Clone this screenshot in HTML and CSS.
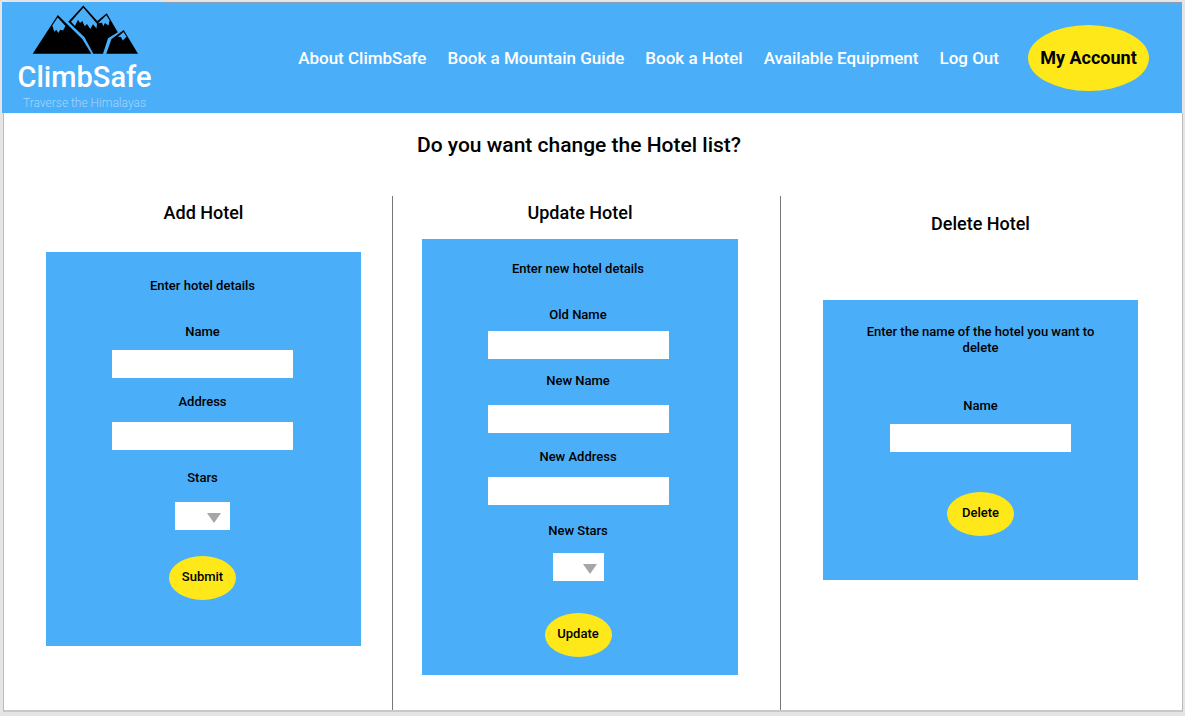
FILE: index.html
```html
<!DOCTYPE html>
<html lang="en">
<head>
<meta charset="utf-8">
<title>ClimbSafe - Hotels</title>
<link rel="stylesheet" href="styles.css">
</head>
<body>
<header class="header">
  <a class="brand" href="#">
    <svg class="brand-mark" viewBox="31 5 106 50" aria-hidden="true">
      <path d="M31.7 54.7 56.8 16 81.3 40 90.3 54.7Z"/>
      <path d="M82.3 6.5 67.3 22.7 83.5 38.3 92.3 54.7H102L107 39.3 116.8 33.3 105.7 14.2 96.3 22Z"/>
      <path d="M105.3 54.7 110.5 40 122.7 31 137 54.7Z"/>
      <path class="snow" d="M56.7 18.6 51.3 26.5 53.3 32.7 55.3 30.7 57.3 34 59.3 30.7 62 31.5 64.5 27Z"/>
      <path class="snow" d="M82.3 8.8 70 22.7 74 27 77 20.7 79 24 81.3 22 83.7 27.3 86 25 89.3 30 92 25.3 95.5 29.5 96 24.7Z"/>
      <path class="snow" d="M105.3 16.2 97 24.2 101 23.7 102.3 27.3 104 24 107.5 26.5 108.6 21.4Z"/>
      <path class="snow" d="M122.5 33 117 37.7 120 38 121.7 41.5 125.5 37.7Z"/>
    </svg>
    <span class="brand-name">ClimbSafe</span>
    <span class="brand-tagline">Traverse the Himalayas</span>
  </a>
  <nav class="nav">
    <a href="#">About ClimbSafe</a>
    <a href="#">Book a Mountain Guide</a>
    <a href="#">Book a Hotel</a>
    <a href="#">Available Equipment</a>
    <a href="#">Log Out</a>
  </nav>
  <button class="oval account" type="button">My Account</button>
</header>
<main class="main">
  <h1 class="title">Do you want change the Hotel list?</h1>
  <div class="columns">
    <section class="column column-add">
      <h2 class="heading">Add Hotel</h2>
      <form class="card">
        <p class="intro">Enter hotel details</p>
        <div class="field name"><label for="add-name">Name</label><input id="add-name" type="text"></div>
        <div class="field address"><label for="add-address">Address</label><input id="add-address" type="text"></div>
        <div class="field stars"><label for="add-stars">Stars</label><select id="add-stars"><option></option><option>1</option><option>2</option><option>3</option><option>4</option><option>5</option></select></div>
        <button class="oval" type="button">Submit</button>
      </form>
    </section>
    <section class="column column-update">
      <h2 class="heading">Update Hotel</h2>
      <form class="card">
        <p class="intro">Enter new hotel details</p>
        <div class="field old-name"><label for="old-name">Old Name</label><input id="old-name" type="text"></div>
        <div class="field new-name"><label for="new-name">New Name</label><input id="new-name" type="text"></div>
        <div class="field new-address"><label for="new-address">New Address</label><input id="new-address" type="text"></div>
        <div class="field new-stars"><label for="new-stars">New Stars</label><select id="new-stars"><option></option><option>1</option><option>2</option><option>3</option><option>4</option><option>5</option></select></div>
        <button class="oval" type="button">Update</button>
      </form>
    </section>
    <section class="column column-delete">
      <h2 class="heading">Delete Hotel</h2>
      <form class="card">
        <p class="intro">Enter the name of the hotel you want to delete</p>
        <div class="field name"><label for="delete-name">Name</label><input id="delete-name" type="text"></div>
        <button class="oval" type="button">Delete</button>
      </form>
    </section>
  </div>
</main>
</body>
</html>
```
FILE: styles.css
```css
* { box-sizing: border-box; }

body {
  margin: 0;
  min-height: 100vh;
  padding: 2px 2px 4px;
  display: flex;
  flex-direction: column;
  background: #e5e5e5;
  color: #000;
  font: 500 13px/16px Roboto, "Liberation Sans", sans-serif;
}

h1, h2, p { margin: 0; font-weight: 500; }

.header {
  display: flex;
  align-items: center;
  min-height: 111px;
  margin-right: 1px;
  padding-right: 33px;
  background: linear-gradient(#8a9fb5, #8a9fb5) 162px 0 / 100% 1px no-repeat #4baef8;
}

.brand {
  display: flex;
  flex-direction: column;
  align-items: center;
  width: 165px;
  padding-top: 2px;
  color: #fff;
  text-decoration: none;
}

.brand-mark { width: 106px; height: 50px; fill: #000; }
.brand-mark .snow { fill: #4baef8; }
.brand-name { font-size: 29px; font-weight: 500; line-height: 32px; margin-top: 7px; }
.brand-tagline { font-size: 12px; line-height: 20px; font-weight: 300; color: #a5d7fc; }

.nav {
  flex: 1;
  display: flex;
  justify-content: flex-end;
  gap: 21px;
  margin-right: 29px;
}

.nav a {
  color: #fff;
  font-size: 17px;
  line-height: 20px;
  text-decoration: none;
  white-space: nowrap;
}

.oval {
  width: 67px;
  height: 44px;
  padding: 0 0 2px;
  border: 0;
  border-radius: 50%;
  background: #ffe81a;
  color: #000;
  font: inherit;
}

.account {
  width: 121px;
  height: 66px;
  padding: 0;
  font-size: 18px;
  font-weight: 700;
}

.main {
  flex: 1;
  display: flex;
  flex-direction: column;
  margin-left: 1px;
  border: 1px solid #bbb;
  border-top: 0;
  border-bottom: 2px solid #c8c8c8;
  background: #fff;
}

.title {
  padding: 20px 28px 0 0;
  font-size: 21px;
  line-height: 24px;
  text-align: center;
}

.columns {
  flex: 1;
  display: grid;
  grid-template-columns: 389fr 388fr 401fr;
  margin-top: 39px;
}

.column { padding: 5px 42px 30px; border-right: 1px solid #777; text-align: center; }
.column-add { padding-right: 31px; }
.column-update { padding-left: 29px; }
.column-delete { padding-top: 16px; padding-right: 44px; border-right: 0; }

.heading { font-size: 18px; line-height: 24px; margin-bottom: 27px; }
.column-update .heading { margin-bottom: 14px; }
.column-delete .heading { margin-bottom: 64px; }

.card {
  display: flex;
  flex-direction: column;
  align-items: center;
  padding: 26px 44px 46px 42px;
  background: #4baef8;
}

.column-update .card { padding: 22px 44px 18px 40px; }
.column-delete .card { padding: 24px 40px 44px; }

.intro { margin-bottom: 30px; }
.column-delete .intro { margin-bottom: 42px; }

.field {
  display: flex;
  flex-direction: column;
  align-items: center;
  gap: 12px;
  margin-bottom: 16px;
}

.name { gap: 10px; }
.address { margin-bottom: 20px; }
.stars { gap: 16px; margin-bottom: 26px; }
.old-name { gap: 8px; margin-bottom: 14px; }
.new-name { gap: 16px; }
.new-address { margin-bottom: 18px; }
.new-stars { gap: 14px; margin-bottom: 32px; }
.column-delete .name { margin-bottom: 40px; }

.field input, .field select {
  width: 181px;
  height: 28px;
  margin: 0;
  padding: 0 8px;
  border: 0;
  border-radius: 0;
  background: #fff;
  font: inherit;
}

.field select {
  width: 55px;
  appearance: none;
  background: #fff url("data:image/svg+xml,%3Csvg xmlns='http://www.w3.org/2000/svg' width='14' height='10'%3E%3Cpath d='M0 0h14L7 10z' fill='%23a6a6a6'/%3E%3C/svg%3E") no-repeat right 9px top 11px;
}

.column-update .field select { width: 51px; background-position: right 7px top 11px; }
```
